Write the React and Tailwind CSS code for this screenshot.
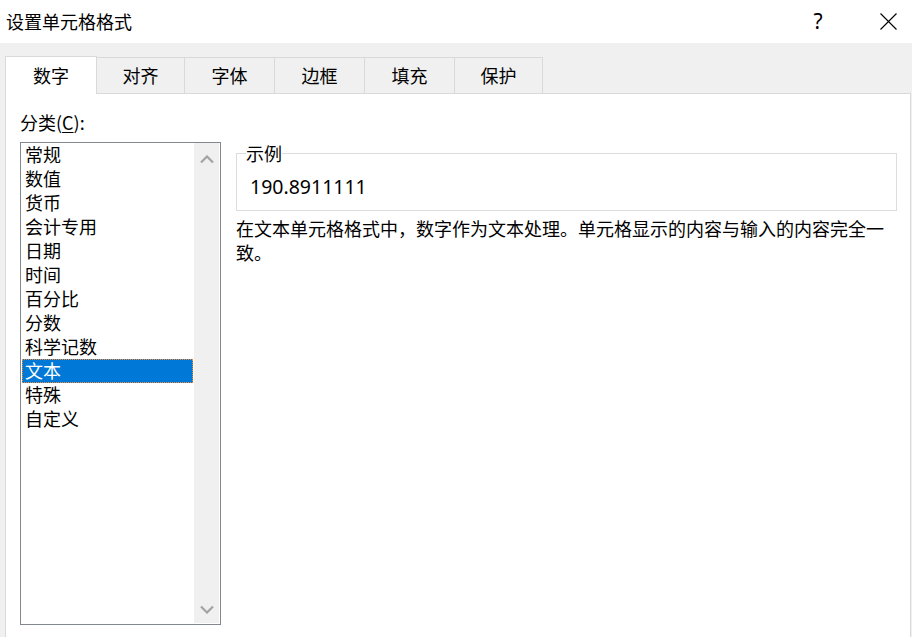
import React from "react";

const tabs = [
  { label: "数字", w: "w-[92px]", active: true },
  { label: "对齐", w: "w-[88px]" },
  { label: "字体", w: "w-[90px]" },
  { label: "边框", w: "w-[90px]" },
  { label: "填充", w: "w-[90px]" },
  { label: "保护", w: "w-[88px]" },
];

const categories = [
  "常规",
  "数值",
  "货币",
  "会计专用",
  "日期",
  "时间",
  "百分比",
  "分数",
  "科学记数",
  "文本",
  "特殊",
  "自定义",
];

const Chevron = ({ down }) => (
  <svg width="14" height="9" viewBox="0 0 14 9" className="block">
    <polyline
      points={down ? "1,1.5 7,7.5 13,1.5" : "1,7.5 7,1.5 13,7.5"}
      fill="none"
      stroke="#a3a3a3"
      strokeWidth="2.2"
    />
  </svg>
);

const FormatCellsDialog = () => {
  return (
    <div className="w-[912px] h-[637px] overflow-hidden bg-[#f0f0f0] text-black font-['Noto_Sans_CJK_SC',sans-serif] text-[18px] leading-[24px]">
      {/* title bar */}
      <div className="h-[43px] bg-white flex items-center pl-[6px]">
        <span className="flex-1 -mt-[1px]">设置单元格格式</span>
        <span className="w-[12px] text-center font-['Noto_Sans',sans-serif] text-[21px] mr-[56px] -mt-[1px]">?</span>
        <svg width="17" height="17" viewBox="0 0 17 17" className="mr-[15px] mb-[1px]">
          <path d="M0.5 0.5 L16.5 16.5 M16.5 0.5 L0.5 16.5" stroke="#000" strokeWidth="1.1" />
        </svg>
      </div>

      {/* tabs */}
      <div className="h-[51px] flex items-end pl-[5px] pr-[1px]">
        {tabs.map((t) =>
          t.active ? (
            <div
              key={t.label}
              className={`${t.w} h-[38px] bg-white border-l border-r border-t border-[#d9d9d9] flex items-center justify-center pb-[2px]`}
            >
              {t.label}
            </div>
          ) : (
            <div
              key={t.label}
              className={`${t.w} h-[37px] border-t border-r border-b border-[#d9d9d9] flex items-center justify-center pb-[1px]`}
            >
              {t.label}
            </div>
          )
        )}
        <div className="flex-1 border-b border-[#d9d9d9]"></div>
      </div>

      {/* panel */}
      <div className="ml-[5px] w-[906px] h-[543px] bg-white border-l border-r border-[#d9d9d9] pl-[14px] pt-[16px]">
        <div>
          分类(<span className="underline underline-offset-2">C</span>):
        </div>
        <div className="flex mt-[8px]">
          <div className="w-[201px] h-[483px] border border-[#828790] flex">
            <div className="flex-1 pl-[1px] pr-[1px] -mt-[1px]">
              {categories.map((c) =>
                c === "文本" ? (
                  <div
                    key={c}
                    className="h-[24px] mt-[1px] -mb-[1px] bg-[#0078d7] text-white border border-dotted border-[#ff8a2a] pl-[2px] leading-[21px]"
                  >
                    {c}
                  </div>
                ) : (
                  <div key={c} className="h-[24px] pl-[3px]">
                    {c}
                  </div>
                )
              )}
            </div>
            <div className="w-[25px] bg-[#f0f0f0] mr-px mb-px flex flex-col items-center justify-between pt-[12px] pb-[9px]">
              <Chevron />
              <Chevron down />
            </div>
          </div>

          <div className="ml-[15px]">
            <div className="relative mt-[11px] w-[661px] h-[58px] border border-[#dcdcdc]">
              <span className="absolute left-[9px] top-[-13px] bg-white">示例</span>
              <div className="pl-[13px] pt-[21px] font-['Noto_Sans',sans-serif] text-[19.5px] leading-[24px]">
                190.8911111
              </div>
            </div>
            <p className="mt-[5px] w-[670px]">
              在文本单元格格式中，数字作为文本处理。单元格显示的内容与输入的内容完全一致。
            </p>
          </div>
        </div>
      </div>
    </div>
  );
};

export default function App() {
  return <FormatCellsDialog />;
}
